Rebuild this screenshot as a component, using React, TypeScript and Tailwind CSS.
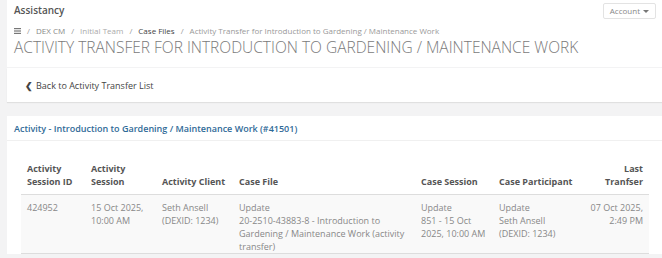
import React from "react";

const rows = [
  {
    id: "424952",
    session: ["15 Oct 2025,", "10:00 AM"],
    client: ["Seth Ansell", "(DEXID: 1234)"],
    caseFile: ["Update", "20-2510-43883-8 - Introduction to Gardening / Maintenance Work (activity transfer)"],
    caseSession: ["Update", "851 - 15 Oct 2025, 10:00 AM"],
    participant: ["Update", "Seth Ansell", "(DEXID: 1234)"],
    last: ["07 Oct 2025,", "2:49 PM"],
  },
];

export default function App() {
  return (
    <div className="w-[662px] h-[258px] overflow-hidden bg-[#f3f3f4] pl-[7px] font-['Open_Sans',sans-serif]">
      {/* Header */}
      <div className="bg-white h-[67px] px-[7px] relative">
        <div className="flex items-center justify-between h-[21px]">
          <span className="text-[10px] font-semibold text-[#555]">Assistancy</span>
          <button className="absolute right-[6px] top-[3px] h-[16px] px-[6px] border border-[#e3e3e3] rounded-[2px] text-[8px] text-[#888] flex items-center gap-[3px]">
            Account
            <span className="w-0 h-0 border-l-[3px] border-r-[3px] border-t-[3px] border-l-transparent border-r-transparent border-t-[#777]" />
          </button>
        </div>
        <div className="flex items-center gap-[6px] text-[8px] text-[#999] mt-[4px] h-[12px] leading-[12px]">
          <svg width="7" height="6" viewBox="0 0 7 6" className="shrink-0">
            <rect x="0" y="0" width="7" height="1.2" fill="#777" />
            <rect x="0" y="2.4" width="7" height="1.2" fill="#777" />
            <rect x="0" y="4.8" width="7" height="1.2" fill="#777" />
          </svg>
          <span>/</span>
          <span className="text-[#888]">DEX CM</span>
          <span>/</span>
          <span className="text-[#aaa]">Initial Team</span>
          <span>/</span>
          <span className="text-[#444]">Case Files</span>
          <span>/</span>
          <span className="text-[#999]">Activity Transfer for Introduction to Gardening / Maintenance Work</span>
        </div>
        <h1 className="text-[15.5px] font-light text-[#7a7a7a] leading-[20px] whitespace-nowrap">
          ACTIVITY TRANSFER FOR INTRODUCTION TO GARDENING / MAINTENANCE WORK
        </h1>
      </div>

      <div className="pt-[1px]">
        {/* Back card */}
        <div className="bg-white h-[34px] flex items-center px-[18px] shadow-[0_1px_1px_rgba(0,0,0,0.08)]">
          <span className="text-[9px] text-[#444] flex items-center gap-[3px] pt-[1px]">
            <span className="font-bold text-[9px]">❮</span> Back to Activity Transfer List
          </span>
        </div>

        {/* Activity card */}
        <div className="bg-white mt-[14px]">
          <div className="h-[25px] flex items-center px-[7px] border-b border-[#f0f0f0]">
            <span className="text-[9px] font-semibold text-[#2f6a97] pt-[1px]">
              Activity - Introduction to Gardening / Maintenance Work (#41501)
            </span>
          </div>
          <div className="pl-[14px] pr-[13px] pt-[21px]">
            <table className="w-[628px] table-fixed border-collapse text-[9px] leading-[13px]">
              <colgroup>
                <col className="w-[64px]" />
                <col className="w-[71px]" />
                <col className="w-[77px]" />
                <col className="w-[182px]" />
                <col className="w-[78px]" />
                <col className="w-[82px]" />
                <col className="w-[74px]" />
              </colgroup>
              <thead>
                <tr className="border-b border-[#ddd] text-[#555] font-bold">
                  <th className="text-left align-bottom px-[6px] pb-[6px]">Activity Session ID</th>
                  <th className="text-left align-bottom px-[6px] pb-[6px]">Activity Session</th>
                  <th className="text-left align-bottom px-[6px] pb-[6px] whitespace-nowrap">Activity Client</th>
                  <th className="text-left align-bottom px-[6px] pb-[6px]">Case File</th>
                  <th className="text-left align-bottom px-[6px] pb-[6px] whitespace-nowrap">Case Session</th>
                  <th className="text-left align-bottom px-[6px] pb-[6px] whitespace-nowrap">Case Participant</th>
                  <th className="text-right align-bottom px-[6px] pb-[6px]">
                    Last
                    <br />
                    Tranfser
                  </th>
                </tr>
              </thead>
              <tbody className="text-[#888]">
                {rows.map((r) => (
                  <tr key={r.id} className="bg-[#f9f9f9] border-b border-[#ddd] align-top">
                    <td className="px-[6px] pt-[6px] pb-[10px]">{r.id}</td>
                    <td className="px-[6px] pt-[6px]">
                      {r.session[0]}
                      <br />
                      {r.session[1]}
                    </td>
                    <td className="px-[6px] pt-[6px]">
                      {r.client[0]}
                      <br />
                      {r.client[1]}
                    </td>
                    <td className="px-[6px] pt-[6px]">
                      {r.caseFile[0]}
                      <br />
                      {r.caseFile[1]}
                    </td>
                    <td className="px-[6px] pt-[6px]">
                      {r.caseSession[0]}
                      <br />
                      {r.caseSession[1]}
                    </td>
                    <td className="px-[6px] pt-[6px]">
                      {r.participant[0]}
                      <br />
                      {r.participant[1]}
                      <br />
                      {r.participant[2]}
                    </td>
                    <td className="px-[6px] pt-[6px] text-right">
                      {r.last[0]}
                      <br />
                      {r.last[1]}
                    </td>
                  </tr>
                ))}
              </tbody>
            </table>
          </div>
        </div>
      </div>
    </div>
  );
}
